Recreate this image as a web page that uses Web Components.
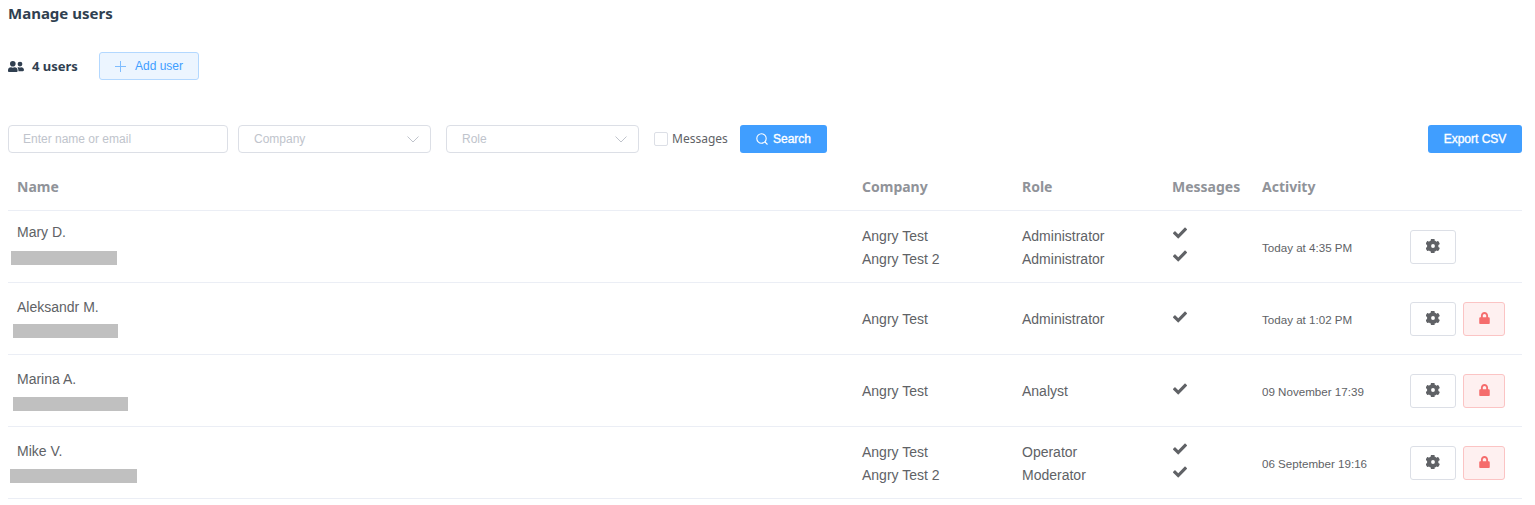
<!DOCTYPE html>
<html><head><meta charset="utf-8"><title>Manage users</title>
<style>
html,body{margin:0;padding:0;background:#fff}
body{font-family:"Noto Sans","Liberation Sans",sans-serif;color:#606266}
</style></head><body>
<um-page></um-page>
<script>
const GEAR='<svg width="14" height="14" viewBox="0 0 512 512" style="display:block"><path fill="#606266" d="M495 322l-44-26c3-26 3-54 0-80l44-26c6-3 8-10 6-16-12-38-32-72-58-100-4-5-11-6-16-3l-44 25a196 196 0 0 0-69-40V6c0-6-4-12-10-13-39-9-78-9-116 0-6 1-10 7-10 13v50a196 196 0 0 0-69 40L65 71c-5-3-12-2-16 3C23 102 3 136-9 174c-2 6 0 13 6 16l44 26c-3 26-3 54 0 80l-44 26c-6 3-8 10-6 16 12 38 32 72 58 100 4 5 11 6 16 3l44-25a196 196 0 0 0 69 40v50c0 6 4 12 10 13 39 9 78 9 116 0 6-1 10-7 10-13v-50a196 196 0 0 0 69-40l44 25c5 3 12 2 16-3 26-28 46-62 58-100 2-6 0-13-6-16zM256 326a70 70 0 1 1 0-140 70 70 0 0 1 0 140z"/></svg>';
const LOCK='<svg width="11" height="12" viewBox="0 0 448 512" style="display:block"><path fill="#f56c6c" d="M400 224h-24v-72C376 68 308 0 224 0S72 68 72 152v72H48c-26 0-48 22-48 48v192c0 26 22 48 48 48h352c26 0 48-22 48-48V272c0-26-22-48-48-48zm-104 0H152v-72c0-40 32-72 72-72s72 32 72 72v72z"/></svg>';
const CHECK='<svg width="14" height="14" viewBox="0 0 512 512" style="display:block"><path fill="#606266" d="M174 452L7 285c-10-10-10-26 0-36l47-47c10-10 26-10 36 0l102 102L422 64c10-10 26-10 36 0l47 47c10 10 10 26 0 36L210 452c-10 10-26 10-36 0z"/></svg>';
const USERS='<svg width="16" height="13" viewBox="0 0 640 512" style="display:block"><path fill="#303f50" d="M192 256a112 112 0 1 0 0-224 112 112 0 0 0 0 224zm77 32h-8a158 158 0 0 1-138 0h-8C52 288 0 340 0 403v29c0 26 22 48 48 48h288c26 0 48-22 48-48v-29c0-63-52-115-115-115zm211-32a96 96 0 1 0 0-192 96 96 0 0 0 0 192zm48 32h-4a127 127 0 0 1-88 0h-4c-20 0-39 6-55 15 24 26 39 60 39 100v38c0 2 0 4-1 6h177c26 0 48-22 48-48 0-62-50-111-112-111z"/></svg>';

class UmTopbar extends HTMLElement{constructor(){super();this.attachShadow({mode:'open'}).innerHTML=`<style>
:host{display:block}
h1{margin:0;height:28px;padding-left:8px;font:700 15px/26px "Noto Sans","Liberation Sans",sans-serif;color:#303f50}
.row{display:flex;align-items:center;margin-top:24px;padding-left:8px;height:28px}
.count{display:flex;align-items:center;gap:8px;font:700 13px "Noto Sans",sans-serif;color:#303f50;width:91px}
button{box-sizing:border-box;width:100px;height:28px;background:#ecf5ff;border:1px solid #b3d8ff;border-radius:3px;color:#409eff;font:12px "Liberation Sans",sans-serif;display:flex;align-items:center;justify-content:center;gap:9px;padding:0}
</style><h1>Manage users</h1><div class="row"><span class="count">${USERS}<span>4 users</span></span>
<button><svg width="11" height="11" viewBox="0 0 11 11"><path d="M5.500 0v11M0 5.500h11" stroke="#7fbdff" fill="none"/></svg><span>Add user</span></button></div>`}}
customElements.define('um-topbar',UmTopbar);

class UmField extends HTMLElement{constructor(){super();const s=this.getAttribute('select')!==null;this.attachShadow({mode:'open'}).innerHTML=`<style>
:host{display:flex;box-sizing:border-box;height:28px;align-items:center;justify-content:space-between;border:1px solid #dcdfe6;border-radius:4px;padding:0 14px 0 15px;font:12px "Liberation Sans",sans-serif;color:#c0c4cc;background:#fff}
</style><span>${this.getAttribute('label')}</span>${s?'<svg width="12" height="7" viewBox="0 0 12 7" style="margin-right:-3px"><path d="M.5.5L6 6 11.500.5" fill="none" stroke="#c0c4cc"/></svg>':''}`}}
customElements.define('um-field',UmField);

class UmButton extends HTMLElement{constructor(){super();this.attachShadow({mode:'open'}).innerHTML=`<style>
:host{display:flex;box-sizing:border-box;height:28px;align-items:center;justify-content:center;gap:5px;background:#409eff;border-radius:3px;color:#fff;font:12px "Liberation Sans",sans-serif;-webkit-text-stroke:.35px #fff}
</style><slot></slot>`}}
customElements.define('um-button',UmButton);

class UmFilters extends HTMLElement{constructor(){super();this.attachShadow({mode:'open'}).innerHTML=`<style>
:host{display:flex;align-items:center;height:28px;margin:45px 13px 0 8px}
.c{display:flex;align-items:center;gap:4px;margin-left:15px;width:86px;font:12px/14px "Noto Sans",sans-serif;color:#606266}
.t{margin-top:-1px}
.b{box-sizing:border-box;width:14px;height:14px;border:1px solid #dcdfe6;border-radius:2px;background:#fff}
</style>
<um-field label="Enter name or email" style="width:220px;padding-left:14px"></um-field>
<um-field select label="Company" style="width:193px;margin-left:10px"></um-field>
<um-field select label="Role" style="width:193px;margin-left:15px"></um-field>
<span class="c"><span class="b"></span><span class="t">Messages</span></span>
<um-button style="width:87px"><svg width="12" height="12" viewBox="0 0 12 12"><circle cx="5.500" cy="5.500" r="4.700" fill="none" stroke="#fff" stroke-width="1.100"/><path d="M9 9l2.500 2.500" stroke="#fff" stroke-width="1.100"/></svg><span>Search</span></um-button>
<um-button style="width:94px;margin-left:auto">Export CSV</um-button>`}}
customElements.define('um-filters',UmFilters);

const COLS='845px 160px 150px 90px 147px 1fr';
class UmHead extends HTMLElement{constructor(){super();this.attachShadow({mode:'open'}).innerHTML=`<style>
:host{display:grid;box-sizing:content-box;grid-template-columns:${COLS};height:47px;padding-top:10px;align-items:center;margin:0 13px 0 8px;border-bottom:1px solid #ebeef5;font:700 14px "Noto Sans",sans-serif;color:#909399}
span{padding-left:9px}
</style><span>Name</span><span>Company</span><span>Role</span><span>Messages</span><span>Activity</span><span></span>`}}
customElements.define('um-head',UmHead);

class UmRow extends HTMLElement{constructor(){super();const a=n=>this.getAttribute(n);
const co=a('company').split('|'),ro=a('role').split('|');
const lines=l=>l.map(t=>`<div class="l">${t}</div>`).join('');
this.attachShadow({mode:'open'}).innerHTML=`<style>
:host{display:grid;grid-template-columns:${COLS};height:71px;align-items:center;margin:0 13px 0 8px;border-bottom:1px solid #ebeef5;font:14px "Liberation Sans",sans-serif;color:#606266}
.cell{padding-left:9px}
.t{margin-top:2px}
.l{line-height:23px;height:23px}
.who{align-self:start}
.n{line-height:20px;height:20px}
.bar{height:14px;background:#c0c0c0}
.m{display:flex;flex-direction:column;gap:9px;margin-top:-4px;padding-left:10px}
.a{font-size:11.6px;margin-top:2px}
.act{display:flex;gap:7px;padding-left:10px}
.btn{box-sizing:border-box;height:34px;display:flex;align-items:center;justify-content:center;border-radius:3px;border:1px solid #dcdfe6;background:#fff;width:46px;padding-bottom:2px}
.lock{width:42px;background:#fef0f0;border-color:#fbc4c4}
</style>
<div class="who"><div class="cell n" style="margin-top:${a('ny')}px">${a('name')}</div><div class="bar" style="margin:${a('by')}px 0 0 ${a('bx')}px;width:${a('bw')}px"></div></div>
<div class="cell t">${lines(co)}</div><div class="cell t">${lines(ro)}</div>
<div class="cell m">${co.map(()=>CHECK).join('')}</div>
<div class="cell a">${a('activity')}</div>
<div class="act"><span class="btn">${GEAR}</span>${a('locked')!==null?`<span class="btn lock">${LOCK}</span>`:''}</div>`}}
customElements.define('um-row',UmRow);

class UmPage extends HTMLElement{constructor(){super();this.attachShadow({mode:'open'}).innerHTML=`<style>:host{display:block}</style>
<um-topbar></um-topbar><um-filters></um-filters><um-head></um-head>
<um-row ny="11" by="9" name="Mary D." bx="3" bw="106" company="Angry Test|Angry Test 2" role="Administrator|Administrator" activity="Today at 4:35 PM"></um-row>
<um-row ny="14" by="7" locked name="Aleksandr M." bx="5" bw="105" company="Angry Test" role="Administrator" activity="Today at 1:02 PM"></um-row>
<um-row ny="14" by="8" locked name="Marina A." bx="5" bw="115" company="Angry Test" role="Analyst" activity="09 November 17:39"></um-row>
<um-row ny="14" by="8" locked name="Mike V." bx="2" bw="127" company="Angry Test|Angry Test 2" role="Operator|Moderator" activity="06 September 19:16"></um-row>`}}
customElements.define('um-page',UmPage);
</script></body></html>
